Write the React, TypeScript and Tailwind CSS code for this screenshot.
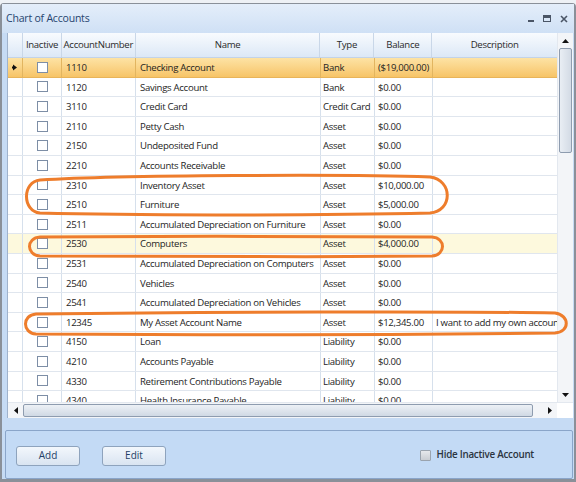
import React from "react";

type Row = { num: string; name: string; type: string; bal: string; desc?: string; sel?: boolean; hl?: boolean };

const rows: Row[] = [
  { num: "1110", name: "Checking Account", type: "Bank", bal: "($19,000.00)", sel: true },
  { num: "1120", name: "Savings Account", type: "Bank", bal: "$0.00" },
  { num: "3110", name: "Credit Card", type: "Credit Card", bal: "$0.00" },
  { num: "2110", name: "Petty Cash", type: "Asset", bal: "$0.00" },
  { num: "2150", name: "Undeposited Fund", type: "Asset", bal: "$0.00" },
  { num: "2210", name: "Accounts Receivable", type: "Asset", bal: "$0.00" },
  { num: "2310", name: "Inventory Asset", type: "Asset", bal: "$10,000.00" },
  { num: "2510", name: "Furniture", type: "Asset", bal: "$5,000.00" },
  { num: "2511", name: "Accumulated Depreciation on Furniture", type: "Asset", bal: "$0.00" },
  { num: "2530", name: "Computers", type: "Asset", bal: "$4,000.00", hl: true },
  { num: "2531", name: "Accumulated Depreciation on Computers", type: "Asset", bal: "$0.00" },
  { num: "2540", name: "Vehicles", type: "Asset", bal: "$0.00" },
  { num: "2541", name: "Accumulated Depreciation on Vehicles", type: "Asset", bal: "$0.00" },
  { num: "12345", name: "My Asset Account Name", type: "Asset", bal: "$12,345.00", desc: "I want to add my own account here" },
  { num: "4150", name: "Loan", type: "Liability", bal: "$0.00" },
  { num: "4210", name: "Accounts Payable", type: "Liability", bal: "$0.00" },
  { num: "4330", name: "Retirement Contributions Payable", type: "Liability", bal: "$0.00" },
  { num: "4340", name: "Health Insurance Payable", type: "Liability", bal: "$0.00" },
];

const font = { fontFamily: '"Open Sans", "Noto Sans", sans-serif' };

function Check({ gray }: { gray?: boolean }) {
  return gray ? (
    <div className="w-[11px] h-[11px] border border-[#9aa3ae] bg-gradient-to-b from-[#e6e8ec] to-[#c9cdd3] rounded-[1px]" />
  ) : (
    <div className="w-[11px] h-[11px] border border-[#7d8ea6] bg-white" />
  );
}

export default function App() {
  return (
    <div className="relative w-[576px] h-[482px] overflow-hidden bg-[#f2f4f7] text-[#1e1e1e]" style={font}>
      <div className="h-[3px] bg-[#eef1f5]" />
      <div className="h-[479px] flex flex-col border-l-[2px] border-r-[2px] border-b-[3px] border-t border-[#8a9099] rounded-t-[4px] bg-[#c6dbf4]">
        {/* title bar */}
        <div className="h-[29px] flex items-center justify-between pl-[4px] pr-[6px] bg-gradient-to-b from-[#e4eefa] to-[#cfe0f5]">
          <span className="text-[10.5px] text-[#26446f] tracking-[-0.2px]">Chart of Accounts</span>
          <div className="flex items-center gap-[9px] text-[#4a5566]">
            <div className="w-[6px] h-[2px] bg-[#4a5566] mt-[4px]" />
            <div className="w-[8px] h-[7px] border border-[#4a5566] border-t-[3px]" />
            <svg width="8" height="8" viewBox="0 0 8 8"><path d="M1 1L7 7M7 1L1 7" stroke="#4a5566" strokeWidth="1.6" /></svg>
          </div>
        </div>
        {/* grid */}
        <div className="ml-[5px] w-[566px] h-[385px] flex flex-col bg-white border-l border-[#9fb2cc]">
          <div className="flex h-[369px]">
            <div className="w-[550px] flex flex-col overflow-hidden text-[9.6px] tracking-[-0.3px]">
              {/* header */}
              <div className="flex h-[25px] shrink-0 bg-gradient-to-b from-[#f8fbfe] to-[#dce8f6] border-b border-[#c3d3e7] text-[#2a2a2a]">
                <div className="w-[15px] border-r border-[#c9d7e8]" />
                <div className="w-[39px] border-r border-[#c9d7e8] flex items-center justify-center">Inactive</div>
                <div className="w-[74px] border-r border-[#c9d7e8] flex items-center justify-center">AccountNumber</div>
                <div className="w-[185px] border-r border-[#c9d7e8] flex items-center justify-center">Name</div>
                <div className="w-[54px] border-r border-[#c9d7e8] flex items-center justify-center">Type</div>
                <div className="w-[58px] border-r border-[#c9d7e8] flex items-center justify-center">Balance</div>
                <div className="w-[125px] flex items-center justify-center">Description</div>
              </div>
              {rows.map((r) => (
                <div
                  key={r.num}
                  className={
                    "flex h-[19.6px] shrink-0 border-b " +
                    (r.sel
                      ? "bg-gradient-to-b from-[#fde3a4] to-[#f7c467] border-[#e8b45a]"
                      : r.hl
                      ? "bg-[#fdf9dd] border-[#e0e6ee]"
                      : "bg-white border-[#e0e6ee]")
                  }
                >
                  <div className={"w-[15px] shrink-0 border-r flex items-center justify-center " + (r.sel ? "border-[#e2b560]" : "border-[#d6e0ec]")}>
                    {r.sel && (
                      <svg width="6" height="7" viewBox="0 0 6 7"><path d="M1 0.5L5 3.5L1 6.5Z" fill="#111" /><rect x="0" y="2.5" width="2" height="2" fill="#111" /></svg>
                    )}
                  </div>
                  <div className={"w-[39px] shrink-0 border-r flex items-center justify-center " + (r.sel ? "border-[#e2b560]" : "border-[#d6e0ec]")}>
                    <Check />
                  </div>
                  <div className={"w-[74px] shrink-0 border-r flex items-center pl-[4px] pt-[2px] " + (r.sel ? "border-[#e2b560]" : "border-[#d6e0ec]")}>{r.num}</div>
                  <div className={"w-[185px] shrink-0 border-r flex items-center pl-[4px] pt-[2px] whitespace-nowrap overflow-hidden " + (r.sel ? "border-[#e2b560]" : "border-[#d6e0ec]")}>{r.name}</div>
                  <div className={"w-[54px] shrink-0 border-r flex items-center pl-[2px] pt-[2px] whitespace-nowrap overflow-hidden " + (r.sel ? "border-[#e2b560]" : "border-[#d6e0ec]")}>{r.type}</div>
                  <div className={"w-[58px] shrink-0 border-r flex items-center pl-[3px] pt-[2px] whitespace-nowrap overflow-hidden " + (r.sel ? "border-[#e2b560]" : "border-[#d6e0ec]")}>{r.bal}</div>
                  <div className="w-[125px] shrink-0 flex items-center pl-[3px] pt-[2px] whitespace-nowrap overflow-hidden">{r.desc ?? ""}</div>
                </div>
              ))}
            </div>
            {/* vertical scrollbar */}
            <div className="w-[16px] flex flex-col bg-[#f3f5f8] border-l border-[#e3e8ef]">
              <div className="h-[15px] flex items-center justify-center">
                <svg width="7" height="4" viewBox="0 0 7 4"><path d="M0 4L3.5 0L7 4Z" fill="#111" /></svg>
              </div>
              <div className="h-[105px] mx-[1px] rounded-[2px] border border-[#8e9caf] bg-gradient-to-r from-[#e9eef4] to-[#d3dbe5]" />
              <div className="flex-1" />
              <div className="h-[15px] flex items-center justify-center">
                <svg width="7" height="4" viewBox="0 0 7 4"><path d="M0 0L3.5 4L7 0Z" fill="#111" /></svg>
              </div>
            </div>
          </div>
          {/* horizontal scrollbar */}
          <div className="h-[16px] flex bg-[#f3f5f8] border-t border-[#e3e8ef]">
            <div className="w-[15px] flex items-center justify-center">
              <svg width="4" height="7" viewBox="0 0 4 7"><path d="M4 0L0 3.5L4 7Z" fill="#111" /></svg>
            </div>
            <div className="w-[510px] my-[1px] rounded-[2px] border border-[#8e9caf] bg-gradient-to-b from-[#edf1f6] to-[#d0d9e4]" />
            <div className="flex-1" />
            <div className="w-[15px] flex items-center justify-center">
              <svg width="4" height="7" viewBox="0 0 4 7"><path d="M0 0L4 3.5L0 7Z" fill="#111" /></svg>
            </div>
            <div className="w-[16px] bg-white" />
          </div>
        </div>
        {/* bottom panel */}
        <div className="mt-[12px] ml-[3px] mr-[1px] flex-1 flex items-center justify-between border border-[#8aa5c9] rounded-[2px] bg-[#c3daf5] pl-[10px] pr-[38px]">
          <div className="flex gap-[22px] mt-[2px]">
            <button className="w-[64px] h-[20px] rounded-[3px] border border-[#8ea3bd] bg-gradient-to-b from-[#f3f7fc] to-[#d9e4f1] text-[10px] text-[#243f66]">Add</button>
            <button className="w-[64px] h-[20px] rounded-[3px] border border-[#8ea3bd] bg-gradient-to-b from-[#f3f7fc] to-[#d9e4f1] text-[10px] text-[#243f66]">Edit</button>
          </div>
          <div className="flex items-center gap-[6px] mt-[2px]">
            <Check gray />
            <span className="text-[9.8px] font-semibold text-[#2b3440] tracking-[-0.25px]">Hide Inactive Account</span>
          </div>
        </div>
      </div>
      {/* annotations */}
      <svg className="absolute left-0 top-0 pointer-events-none" width="576" height="482" viewBox="0 0 576 482">
        <g fill="none" stroke="#ee7d2c" strokeWidth="3">
          <path d="M40 180 C120 175, 350 174, 430 177 C453 180, 453 211, 430 213 C300 216, 120 215, 40 213 C22 211, 22 182, 40 180 Z" />
          <path d="M40 237 C150 236, 350 236, 432 237 C446 238, 446 255, 432 256 C300 257, 150 257, 40 256 C26 255, 26 238, 40 237 Z" />
          <path d="M36 314 C200 312, 450 311, 555 313 C570 315, 570 332, 555 333 C400 335, 200 335, 36 334 C22 333, 22 315, 36 314 Z" />
        </g>
      </svg>
    </div>
  );
}
